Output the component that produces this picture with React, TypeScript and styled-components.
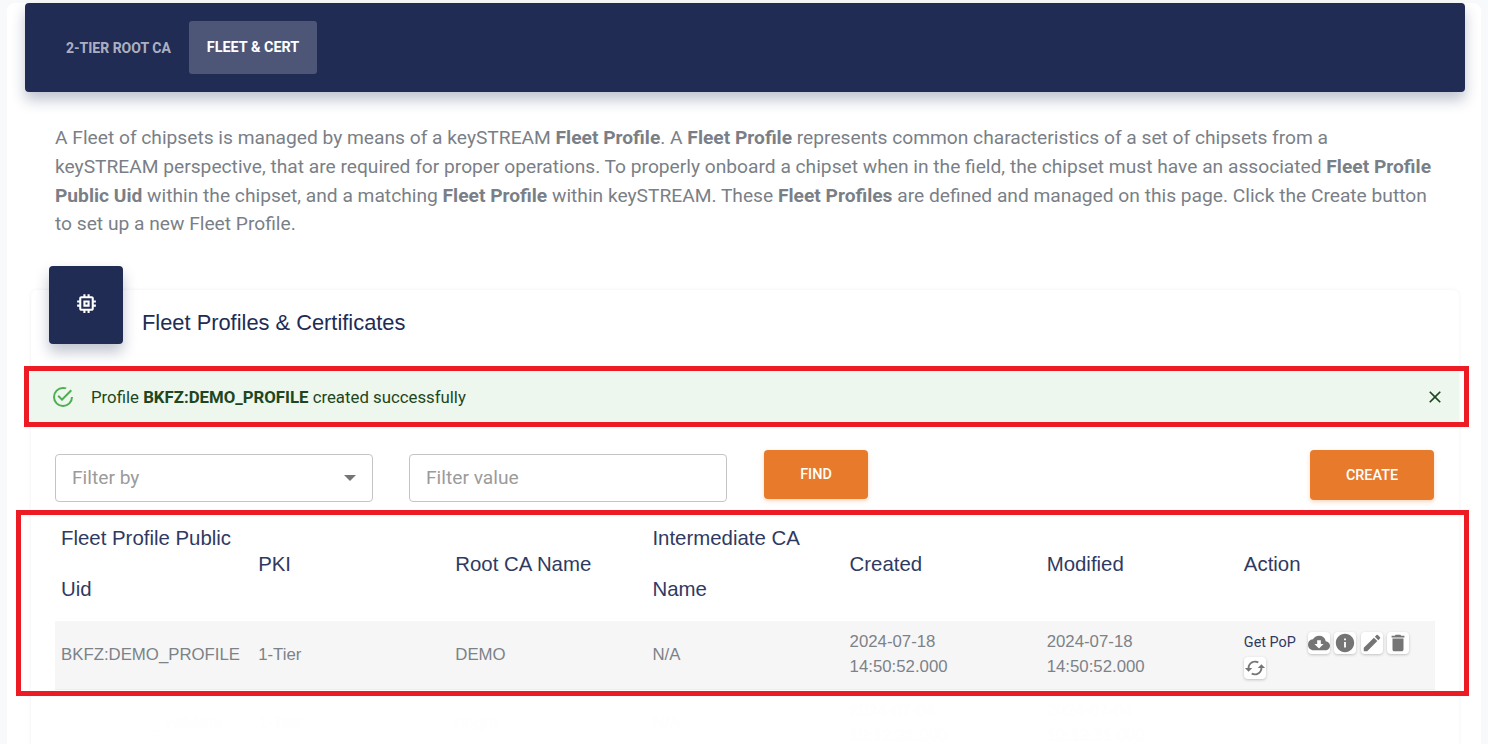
import styled, { createGlobalStyle } from "styled-components";
import {
  MdCached,
  MdClose,
  MdCloudDownload,
  MdDelete,
  MdEdit,
  MdInfo,
  MdMemory,
} from "react-icons/md";

const GlobalStyle = createGlobalStyle`
  html, body {
    margin: 0;
    height: 744px;
    overflow: hidden;
    background: #f8f9fa;
    font-family: Roboto, "Liberation Sans", sans-serif;
  }
`;

const Page = styled.div`
  position: relative;
  height: 744px;
  padding: 27px 7px 0;
  box-sizing: border-box;
  overflow: hidden;
`;

const Sheet = styled.div`
  background: #fff;
  border-radius: 8px 8px 0 0;
  height: 760px;
  padding: 0 16px 0 18px;
  box-sizing: border-box;
`;

const TabBar = styled.nav`
  margin-top: -24px;
  height: 89px;
  background: #212c55;
  border-radius: 4px;
  box-shadow: 0 8px 14px rgba(33, 44, 85, 0.28);
  display: flex;
  align-items: center;
  padding: 0 23px;
`;

const Tab = styled.div<{ $active?: boolean }>`
  height: 53px;
  padding: 0 18px;
  display: flex;
  align-items: center;
  border-radius: 3px;
  font-size: ${(p) => (p.$active ? "14.4px" : "14px")};
  font-weight: 700;
  color: ${(p) => (p.$active ? "#fff" : "rgba(255,255,255,0.65)")};
  background: ${(p) => (p.$active ? "rgba(255,255,255,0.2)" : "transparent")};
`;

const Intro = styled.p`
  margin: 32px 0 0;
  padding: 0 30px;
  font-size: 19.2px;
  line-height: 28.8px;
  color: #7a7f87;
  font-weight: 400;

  b {
    font-weight: 700;
  }
`;

const Panel = styled.section`
  margin: 51px 6px 0;
  height: 500px;
  background: #fff;
  border-radius: 6px;
  box-shadow: 0 0 4px rgba(0, 0, 0, 0.06);
`;

const PanelHead = styled.header`
  display: flex;
  height: 81px;
`;

const IconTile = styled.div`
  margin: -24px 0 0 18px;
  width: 74px;
  height: 78px;
  flex: none;
  padding-bottom: 3px;
  box-sizing: border-box;
  background: #212c55;
  border-radius: 4px;
  box-shadow: 0 8px 14px rgba(33, 44, 85, 0.28);
  color: #fff;
  display: flex;
  align-items: center;
  justify-content: center;
  font-size: 25px;
`;

const PanelTitle = styled.h2`
  margin: 20px 0 0 19px;
  font-family: "Liberation Sans", Arial, sans-serif;
  font-weight: 400;
  font-size: 21.85px;
  line-height: 26px;
  color: #212c55;
`;

const Alert = styled.div`
  height: 51px;
  box-sizing: border-box;
  background: #edf7ed;
  color: #1e4620;
  display: flex;
  align-items: center;
  padding: 1px 14px 0 20px;
  font-size: 16.8px;

  b {
    font-weight: 700;
  }
`;

const AlertIcon = styled.svg`
  width: 24px;
  height: 24px;
  fill: #4caf50;
  margin-right: 16px;
  flex: none;
`;

const AlertText = styled.div`
  flex: 1;
`;

const AlertClose = styled.div`
  display: flex;
  font-size: 20px;
  color: #1e4620;
`;

const FilterRow = styled.div`
  display: flex;
  align-items: flex-start;
  padding: 28px 25px 0 24px;
  height: 88px;
  box-sizing: border-box;
`;

const Field = styled.div`
  width: 318px;
  height: 48px;
  margin-top: 4px;
  margin-right: 36px;
  box-sizing: border-box;
  border: 1px solid #c4c4c4;
  border-radius: 4px;
  display: flex;
  align-items: center;
  justify-content: space-between;
  padding: 0 16px 1px;
  font-size: 19.2px;
  color: #9b9b9b;
`;

const Caret = styled.span`
  width: 0;
  height: 0;
  border-left: 6px solid transparent;
  border-right: 6px solid transparent;
  border-top: 6px solid #757575;
`;

const ActionButton = styled.button<{ $wide?: boolean }>`
  width: ${(p) => (p.$wide ? "124px" : "104px")};
  height: ${(p) => (p.$wide ? "50px" : "49px")};
  margin-left: ${(p) => (p.$wide ? "auto" : "1px")};
  border: 0;
  border-radius: 4px;
  background: #e87a2c;
  color: #fff;
  font-family: Roboto, sans-serif;
  font-size: 14.4px;
  font-weight: 500;
  box-shadow: 0 2px 4px rgba(232, 122, 44, 0.3);
`;

const Table = styled.table`
  margin: 3px 0 0 24px;
  width: 1380px;
  border-collapse: collapse;
  table-layout: fixed;
  font-family: "Liberation Sans", Arial, sans-serif;
`;

const Th = styled.th`
  text-align: left;
  font-weight: 400;
  font-size: 20.4px;
  line-height: 51px;
  color: #2f3a62;
  padding: 0 6px 6px;
  height: 108px;
  box-sizing: border-box;
`;

const Row = styled.tr<{ $faint?: boolean }>`
  background: ${(p) => (p.$faint ? "#fff" : "#f6f6f6")};
  border-bottom: 1px solid ${(p) => (p.$faint ? "#fff" : "#eeeeee")};
`;

const Td = styled.td<{ $faint?: boolean; $indent?: number }>`
  padding: 0 6px 1px ${(p) => p.$indent ?? 6}px;
  box-sizing: border-box;
  font-size: 16.8px;
  line-height: 25px;
  color: ${(p) => (p.$faint ? "#fefefe" : "#7c8288")};
  height: 68px;
  white-space: nowrap;
`;

const ActionCell = styled.div`
  display: flex;
  flex-wrap: wrap;
  align-items: center;
  row-gap: 3px;
  width: 175px;
  margin-top: 2px;
`;

const PopLabel = styled.span`
  font-family: Roboto, sans-serif;
  font-size: 14.4px;
  line-height: 22px;
  color: #2f3a62;
  margin-right: 12px;
`;

const IconBtn = styled.span<{ $size?: number }>`
  width: 22px;
  height: 22px;
  margin-right: 4.5px;
  border-radius: 4px;
  background: #fff;
  box-shadow: 0 1px 3px rgba(0, 0, 0, 0.22);
  color: #757575;
  font-size: ${(p) => p.$size ?? 22}px;
  display: flex;
  align-items: center;
  justify-content: center;
`;

// red marks drawn on top of the screenshot
const Mark = styled.div<{ $top: number; $left: number; $width: number; $height: number }>`
  position: absolute;
  top: ${(p) => p.$top}px;
  left: ${(p) => p.$left}px;
  width: ${(p) => p.$width}px;
  height: ${(p) => p.$height}px;
  box-sizing: border-box;
  border: 5px solid #ed1c24;
`;

const headers = [
  "Fleet Profile Public Uid",
  "PKI",
  "Root CA Name",
  "Intermediate CA Name",
  "Created",
  "Modified",
  "Action",
];

export default function App() {
  return (
    <Page>
      <GlobalStyle />
      <Sheet>
        <TabBar>
          <Tab>2-TIER ROOT CA</Tab>
          <Tab $active>FLEET &amp; CERT</Tab>
        </TabBar>
        <Intro>
          A Fleet of chipsets is managed by means of a keySTREAM <b>Fleet Profile</b>. A{" "}
          <b>Fleet Profile</b> represents common characteristics of a set of chipsets from a
          keySTREAM&nbsp;perspective, that are required for proper operations. To properly onboard a
          chipset when in the field, the chipset must have an associated{" "}
          <b>Fleet Profile Public Uid</b> within the chipset, and a matching <b>Fleet Profile</b>{" "}
          within keySTREAM. These <b>Fleet Profiles</b> are defined and managed on this page. Click
          the Create button to set up a new Fleet Profile.
        </Intro>
        <Panel>
          <PanelHead>
            <IconTile>
              <MdMemory />
            </IconTile>
            <PanelTitle>Fleet Profiles &amp; Certificates</PanelTitle>
          </PanelHead>
          <Alert>
            <AlertIcon viewBox="0 0 24 24">
              <path d="M20,12A8,8 0 0,1 12,20A8,8 0 0,1 4,12A8,8 0 0,1 12,4C12.76,4 13.5,4.11 14.2,4.31L15.77,2.74C14.61,2.26 13.34,2 12,2A10,10 0 0,0 2,12A10,10 0 0,0 12,22A10,10 0 0,0 22,12M7.91,10.08L6.5,11.5L11,16L21,6L19.59,4.58L11,13.17L7.91,10.08Z" />
            </AlertIcon>
            <AlertText>
              Profile <b>BKFZ:DEMO_PROFILE</b> created successfully
            </AlertText>
            <AlertClose>
              <MdClose />
            </AlertClose>
          </Alert>
          <FilterRow>
            <Field>
              Filter by
              <Caret />
            </Field>
            <Field>Filter value</Field>
            <ActionButton>FIND</ActionButton>
            <ActionButton $wide>CREATE</ActionButton>
          </FilterRow>
          <Table>
            <thead>
              <tr>
                {headers.map((h) => (
                  <Th key={h}>{h}</Th>
                ))}
              </tr>
            </thead>
            <tbody>
              <Row>
                <Td>BKFZ:DEMO_PROFILE</Td>
                <Td>1-Tier</Td>
                <Td>DEMO</Td>
                <Td>N/A</Td>
                <Td>
                  2024-07-18
                  <br />
                  14:50:52.000
                </Td>
                <Td>
                  2024-07-18
                  <br />
                  14:50:52.000
                </Td>
                <Td>
                  <ActionCell>
                    <PopLabel>Get PoP</PopLabel>
                    <IconBtn $size={26}>
                      <MdCloudDownload />
                    </IconBtn>
                    <IconBtn>
                      <MdInfo />
                    </IconBtn>
                    <IconBtn>
                      <MdEdit />
                    </IconBtn>
                    <IconBtn>
                      <MdDelete />
                    </IconBtn>
                    <IconBtn>
                      <MdCached />
                    </IconBtn>
                  </ActionCell>
                </Td>
              </Row>
              <Row $faint>
                <Td $faint $indent={100}>
                  _validate
                </Td>
                <Td $faint>1-Tier</Td>
                <Td $faint>negra</Td>
                <Td $faint>N/A</Td>
                <Td $faint>
                  2024-07-04
                  <br />
                  10:12:31.000
                </Td>
                <Td $faint>
                  2024-07-04
                  <br />
                  10:12:31.000
                </Td>
                <Td $faint />
              </Row>
            </tbody>
          </Table>
        </Panel>
      </Sheet>
      <Mark $top={366} $left={24} $width={1445} $height={61} />
      <Mark $top={510} $left={16} $width={1453} $height={186} />
    </Page>
  );
}
